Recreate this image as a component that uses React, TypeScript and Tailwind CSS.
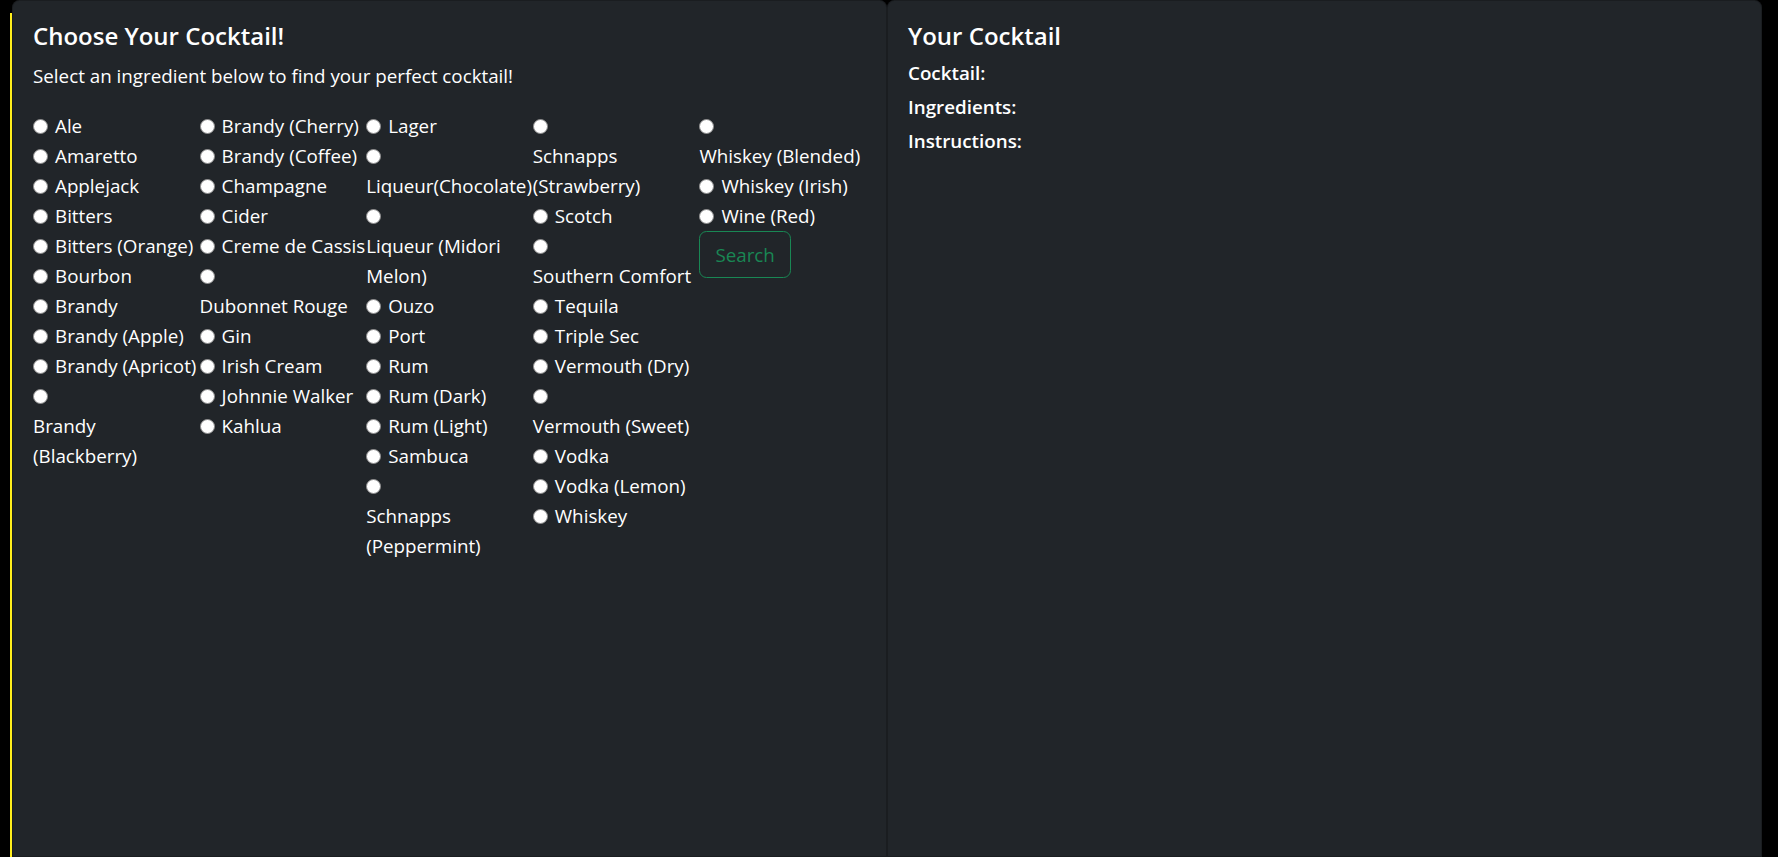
import React from "react";

// a string sits next to its radio; an array drops below the radio, one entry per line
type Item = string | string[];

const columns: Item[][] = [
  [
    "Ale",
    "Amaretto",
    "Applejack",
    "Bitters",
    "Bitters (Orange)",
    "Bourbon",
    "Brandy",
    "Brandy (Apple)",
    "Brandy (Apricot)",
    ["Brandy", "(Blackberry)"],
  ],
  [
    "Brandy (Cherry)",
    "Brandy (Coffee)",
    "Champagne",
    "Cider",
    "Creme de Cassis",
    ["Dubonnet Rouge"],
    "Gin",
    "Irish Cream",
    "Johnnie Walker",
    "Kahlua",
  ],
  [
    "Lager",
    ["Liqueur(Chocolate)"],
    ["Liqueur (Midori", "Melon)"],
    "Ouzo",
    "Port",
    "Rum",
    "Rum (Dark)",
    "Rum (Light)",
    "Sambuca",
    ["Schnapps", "(Peppermint)"],
  ],
  [
    ["Schnapps", "(Strawberry)"],
    "Scotch",
    ["Southern Comfort"],
    "Tequila",
    "Triple Sec",
    "Vermouth (Dry)",
    ["Vermouth (Sweet)"],
    "Vodka",
    "Vodka (Lemon)",
    "Whiskey",
  ],
  [["Whiskey (Blended)"], "Whiskey (Irish)", "Wine (Red)"],
];

function Ingredient({ item }: { item: Item }) {
  const stacked = Array.isArray(item);
  const name = stacked ? item.join(" ") : item;
  const radio = (
    <input
      type="radio"
      name="ingredient"
      value={name}
      className="m-0 mt-[8px] h-[15px] w-[15px] shrink-0 appearance-none rounded-full border border-[#8c8c8c] bg-white"
    />
  );

  if (!stacked) {
    return (
      <label className="flex items-start gap-[7px] whitespace-nowrap">
        {radio}
        <span>{name}</span>
      </label>
    );
  }

  return (
    <label className="block whitespace-nowrap">
      <span className="flex h-[30px]">{radio}</span>
      {item.map((line) => (
        <span key={line} className="block">
          {line}
        </span>
      ))}
    </label>
  );
}

export default function App() {
  return (
    <div className="flex h-screen items-start overflow-hidden bg-black pl-[10px] font-['Open_Sans',sans-serif] text-[18.8px] leading-[30px] text-white">
      <div className="mt-[13px] w-[2px] self-stretch bg-[#ffee1c]" />

      <section className="h-full w-[875px] shrink-0 rounded-t-[7.5px] border border-black/20 bg-[#212529] p-[20px]">
        <h5 className="mb-[10px] text-[24px] font-semibold leading-[30px]">
          Choose Your Cocktail!
        </h5>
        <p className="mb-[20px]">
          Select an ingredient below to find your perfect cocktail!
        </p>

        <form className="flex" onSubmit={(e) => e.preventDefault()}>
          {columns.map((col, i) => (
            <div key={i} className="flex min-w-0 flex-1 flex-col items-start">
              {col.map((item) => (
                <Ingredient key={Array.isArray(item) ? item.join(" ") : item} item={item} />
              ))}
              {i === columns.length - 1 && (
                <button
                  type="submit"
                  className="rounded-[7.5px] border border-[#198754] px-[15px] py-[7.5px] leading-[30px] text-[#198754]"
                >
                  Search
                </button>
              )}
            </div>
          ))}
        </form>
      </section>

      <section className="h-full w-[875px] shrink-0 rounded-t-[7.5px] border border-black/20 bg-[#212529] p-[20px]">
        <h5 className="mb-[10px] text-[24px] font-semibold leading-[30px]">
          Your Cocktail
        </h5>
        <h6 className="mb-[10px] font-semibold leading-[24px]">Cocktail:</h6>
        <h6 className="mb-[10px] font-semibold leading-[24px]">Ingredients:</h6>
        <h6 className="mb-[10px] font-semibold leading-[24px]">Instructions:</h6>
      </section>
    </div>
  );
}
